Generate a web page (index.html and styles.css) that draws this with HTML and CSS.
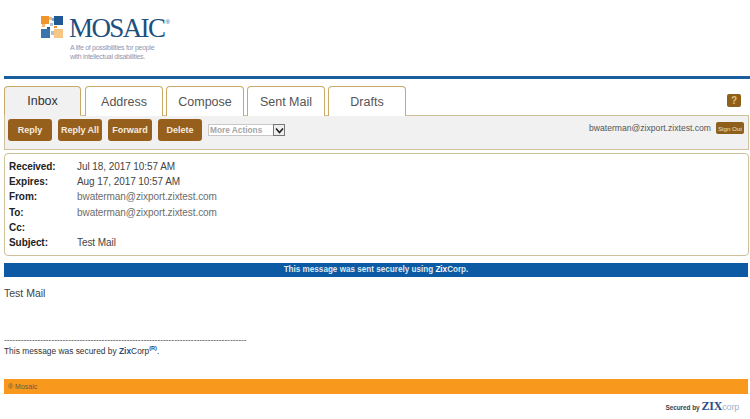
FILE: index.html
```html
<!DOCTYPE html>
<html lang="en">
<head>
<meta charset="utf-8">
<title>Mosaic Secure Mail</title>
<link rel="stylesheet" href="styles.css">
</head>
<body>
<header class="brand">
  <div class="logo">
    <div class="logo-top">
      <svg class="logo-mark" width="22" height="22" viewBox="0 0 22 22" aria-hidden="true">
        <rect x="0" y="0" width="8" height="8" fill="#f0952e"/>
        <rect x="8" y="1" width="3" height="3" fill="#f7b872"/>
        <rect x="1" y="8" width="3" height="3" fill="#f7b872"/>
        <rect x="13" y="0" width="9" height="9" fill="#1f5a94"/>
        <rect x="11" y="2" width="2" height="3" fill="#7ea5cb"/>
        <rect x="0" y="13" width="9" height="9" fill="#3a74ad"/>
        <rect x="13" y="13" width="9" height="9" fill="#f8c684"/>
        <rect x="9" y="7" width="3" height="3" fill="#a9c2dc"/>
        <rect x="13" y="10" width="3" height="2" fill="#f0952e"/>
        <rect x="6" y="11" width="3" height="2" fill="#1f5a94"/>
        <rect x="10" y="15" width="3" height="4" fill="#a9c2dc"/>
      </svg>
      <span class="logo-name">MOSAIC</span><span class="logo-reg">®</span>
    </div>
    <p class="logo-tag">A life of possibilities for people<br>with intellectual disabilities.</p>
  </div>
</header>
<div class="rule"></div>
<main class="page">
  <nav class="tabs">
    <a class="tab tab-active">Inbox</a>
    <a class="tab">Address</a>
    <a class="tab">Compose</a>
    <a class="tab">Sent Mail</a>
    <a class="tab">Drafts</a>
    <span class="help">?</span>
  </nav>
  <section class="toolbar">
    <div class="actions">
      <button class="btn">Reply</button>
      <button class="btn">Reply All</button>
      <button class="btn">Forward</button>
      <button class="btn">Delete</button>
      <div class="select"><span class="select-text">More Actions</span>
        <span class="select-arrow"><svg width="9" height="7" viewBox="0 0 9 7" aria-hidden="true"><path d="M1 1.5 L4.5 5.5 L8 1.5" fill="none" stroke="#222" stroke-width="1.6"/></svg></span>
      </div>
    </div>
    <div class="account">
      <span class="account-mail">bwaterman@zixport.zixtest.com</span>
      <button class="signout">Sign Out</button>
    </div>
  </section>
  <section class="details">
    <div class="row"><span class="label">Received:</span><span>Jul 18, 2017 10:57 AM</span></div>
    <div class="row"><span class="label">Expires:</span><span>Aug 17, 2017 10:57 AM</span></div>
    <div class="row"><span class="label">From:</span><span class="addr">bwaterman@zixport.zixtest.com</span></div>
    <div class="row"><span class="label">To:</span><span class="addr">bwaterman@zixport.zixtest.com</span></div>
    <div class="row"><span class="label">Cc:</span><span></span></div>
    <div class="row"><span class="label">Subject:</span><span>Test Mail</span></div>
  </section>
  <div class="notice">This message was sent securely using <b>Zix</b>Corp.</div>
  <p class="body-text">Test Mail</p>
  <div class="dashes">---------------------------------------------------------------------------------------</div>
  <p class="secured">This message was secured by <b>Zix</b>Corp<sup>(R)</sup>.</p>
  <footer class="foot">® Mosaic</footer>
  <div class="powered"><span class="powered-by">Secured by</span><span class="zix">ZIX</span><span class="corp">CORP</span></div>
</main>
</body>
</html>
```
FILE: styles.css
```css
* { box-sizing: border-box; }
html, body { margin: 0; padding: 0; background: #fff; }
body { width: 750px; height: 419px; overflow: hidden; font-family: "Liberation Sans", Arial, sans-serif; color: #333; }

.brand { height: 76px; padding: 15px 0 0 41px; }
.logo-top { display: flex; align-items: flex-start; height: 26px; }
.logo-mark { margin-top: 1px; flex: none; }
.logo-name { margin-left: 6px; font-family: "Liberation Serif", serif; font-size: 27px; line-height: 26px; color: #1d4f7f; letter-spacing: -1.6px; }
.logo-reg { font-size: 6px; line-height: 10px; color: #1d4f7f; margin: 2px 0 0 1px; }
.logo-tag { margin: 2px 0 0 29px; font-size: 7px; line-height: 9px; color: #8f95b0; letter-spacing: -0.28px; }

.rule { height: 3px; margin-left: 4px; background: #1b5e9e; }
.page { padding: 7px 1px 0 4px; }

.tabs { display: flex; gap: 3px; height: 30px; align-items: stretch; position: relative; z-index: 1; margin-bottom: -1px; }
.tab { width: 78px; display: flex; justify-content: center; align-items: center; font-size: 12.5px; color: #555; background: #fff; border: 1px solid #c9a968; border-bottom: 0; border-radius: 4px 4px 0 0; }
.tab-active { width: 77px; margin-right: 1px; background: #f1f1f1; color: #333; border-bottom: 1px solid #f1f1f1; }
.help { margin: 8px 8px 0 auto; width: 14px; height: 13px; border-radius: 2px; background: #8f5f1c; color: #e2c27e; font-size: 10px; font-weight: bold; line-height: 13px; text-align: center; }

.toolbar { height: 35px; display: flex; justify-content: space-between; padding: 3px 4px 0 3px; background: #f1f1f1; border: 1px solid #cfc199; }
.actions { display: flex; gap: 6px; align-items: flex-start; }
.btn { width: 44px; height: 22px; padding: 0; border: 0; border-radius: 3px; background: #96601c; color: #f4ece0; font-family: "Liberation Sans", Arial, sans-serif; font-size: 9px; font-weight: bold; }
.select { width: 77px; height: 12px; margin-top: 5px; display: flex; justify-content: space-between; align-items: center; background: #fff; border: 1px solid #c8c8c8; border-right: 0; }
.select-text { font-size: 8.3px; font-weight: bold; color: #a5a5a5; padding-left: 1px; }
.select-arrow { width: 12px; height: 12px; display: flex; justify-content: center; align-items: center; background: #eee; border: 1px solid #777; }
.account { display: flex; gap: 5px; align-items: flex-start; }
.account-mail { font-size: 8.6px; line-height: 18px; color: #555; }
.signout { width: 28px; height: 12px; margin-top: 3px; padding: 0; border: 0; border-radius: 2px; background: #8f5f1c; color: #eee0c4; font-family: "Liberation Sans", Arial, sans-serif; font-size: 6.2px; }

.details { height: 103px; margin-top: 3px; padding: 5px 0 0 4px; border: 1px solid #cfc199; border-radius: 4px; font-size: 10px; letter-spacing: -0.07px; }
.row { display: flex; height: 15.2px; line-height: 15px; color: #444; }
.label { width: 68px; flex: none; font-weight: bold; color: #222; }
.addr { color: #6c6c6c; }

.notice { height: 14px; margin: 7px 1px 0 0; background: #0c5aa4; color: #dfe8f0; font-size: 8.15px; font-weight: bold; line-height: 14px; text-align: center; }
.notice b { color: #fff; }
.body-text { margin: 9px 0 0; font-size: 10.5px; line-height: 14px; color: #444; }
.dashes { margin-top: 36px; font-size: 8.4px; line-height: 9px; color: #555; white-space: nowrap; }
.secured { margin: 0; font-size: 8.4px; line-height: 13px; color: #333; }
.secured b { color: #2a4d7a; font-weight: bold; }
.secured sup { font-size: 5.5px; font-weight: bold; line-height: 0; color: #1f3f6a; }
.foot { height: 15px; margin: 21px 1px 0 0; background: #f8981d; color: #6a5a44; font-size: 7px; line-height: 15px; padding-left: 4px; }
.powered { display: flex; justify-content: flex-end; align-items: baseline; padding: 5px 10px 0 0; }
.powered-by { font-size: 6.5px; font-weight: bold; color: #444; margin-right: 2px; letter-spacing: -0.1px; }
.zix { font-family: "Liberation Serif", serif; font-size: 12px; font-weight: bold; color: #2a4d86; letter-spacing: -0.2px; }
.corp { font-size: 9px; color: #9fb0c8; letter-spacing: -0.2px; text-transform: lowercase; }
```
